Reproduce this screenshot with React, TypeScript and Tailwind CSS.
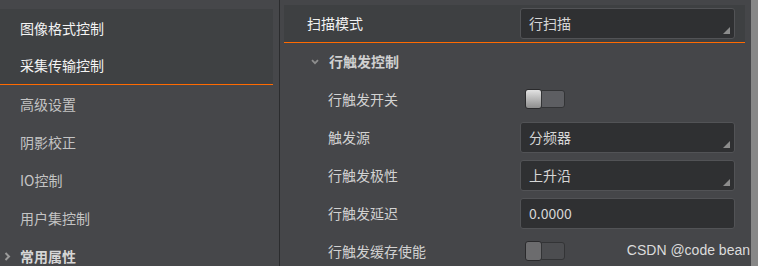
import type { ReactNode } from "react";

const font = "font-['Noto_Sans_CJK_SC','Noto_Sans',sans-serif]";

function NavItem({ label, active }: { label: string; active?: boolean }) {
  return (
    <div
      className={`flex h-[38px] shrink-0 items-center pl-[20px] text-[14px] ${
        active ? "text-[#f4f4f4]" : "text-[#c4c4c4]"
      }`}
    >
      {label}
    </div>
  );
}

function Select({ value, arrow = true }: { value: string; arrow?: boolean }) {
  return (
    <div className="relative flex h-[31px] w-[215px] items-center rounded-[3px] border border-[#525356] bg-[#2f3032] pl-[8px] text-[14px] text-[#d6d6d6]">
      {value}
      {arrow && (
        <svg className="absolute right-[4px] bottom-[4px]" width="7" height="7" viewBox="0 0 7 7">
          <path d="M7 0 L7 7 L0 7 Z" fill="#8c8c8c" />
        </svg>
      )}
    </div>
  );
}

function Switch({ on }: { on?: boolean }) {
  return (
    <div className="ml-[5px] flex h-[20px] w-[40px] items-center">
      <div
        className={`h-[20px] w-[17px] rounded-[3px] border border-[#2a2a2c] ${
          on
            ? "bg-gradient-to-b from-[#e2e2e2] to-[#8e8e8e]"
            : "bg-[#6c6c6e]"
        }`}
      />
      <div
        className={`-ml-[1px] h-[18px] flex-1 rounded-r-[3px] border border-[#333436] ${
          on ? "bg-[#5d5e62]" : "bg-[#4c4d50]"
        }`}
      />
    </div>
  );
}

function Row({ label, children }: { label: string; children: ReactNode }) {
  return (
    <div className="flex h-[38px] shrink-0 items-center">
      <div className="w-[236px] pl-[44px] text-[14px] text-[#d2d2d2]">{label}</div>
      {children}
    </div>
  );
}

export default function App() {
  return (
    <div className={`relative flex h-[266px] w-[758px] overflow-hidden bg-[#454649] ${font}`}>
      {/* left tree */}
      <div className="flex w-[279px] shrink-0 flex-col bg-[#46474a] pt-[9px]">
        <div className="w-[273px] shrink-0 border-b border-[#ff6a00] bg-[#3f4143]">
          <NavItem label="图像格式控制" active />
          <div className="-mt-[1px]">
            <NavItem label="采集传输控制" active />
          </div>
        </div>
        <NavItem label="高级设置" />
        <NavItem label="阴影校正" />
        <NavItem label="IO控制" />
        <NavItem label="用户集控制" />
        <div className="flex h-[38px] shrink-0 items-center pl-[4px] text-[14px] font-bold text-[#d6d6d6]">
          <svg width="7" height="9" viewBox="0 0 7 9" className="mr-[9px]">
            <path d="M1.5 1 L5 4.5 L1.5 8" stroke="#9a9a9a" strokeWidth="2" fill="none" />
          </svg>
          常用属性
        </div>
      </div>

      {/* right properties */}
      <div className="flex flex-1 border-l border-[#2b2c2e]">
        <div className="flex flex-1 flex-col pl-[4px] pr-[6px] pt-[5px]">
          <div className="flex h-[38px] shrink-0 items-center border-b border-[#ff6a00] bg-[#3e4042]">
            <div className="w-[236px] pl-[23px] text-[14px] text-[#f2f2f2]">扫描模式</div>
            <Select value="行扫描" />
          </div>
          <div className="flex h-[37px] shrink-0 items-center pl-[27px] text-[14px] font-bold text-[#d0d0d0]">
            <svg width="8" height="6" viewBox="0 0 8 6" className="mr-[10px]">
              <path d="M1 1.2 L4 4.2 L7 1.2" stroke="#8e8e8e" strokeWidth="1.8" fill="none" />
            </svg>
            行触发控制
          </div>
          <Row label="行触发开关">
            <Switch on />
          </Row>
          <Row label="触发源">
            <Select value="分频器" />
          </Row>
          <Row label="行触发极性">
            <Select value="上升沿" />
          </Row>
          <Row label="行触发延迟">
            <Select value="0.0000" arrow={false} />
          </Row>
          <Row label="行触发缓存使能">
            <Switch />
          </Row>
        </div>
        <div className="w-[7px] shrink-0 bg-[#878787]" />
      </div>

      <div className="absolute right-[8px] bottom-[5px] font-['Liberation_Sans',sans-serif] text-[14px] text-[#dcdcdc]">
        CSDN @code bean
      </div>
    </div>
  );
}
